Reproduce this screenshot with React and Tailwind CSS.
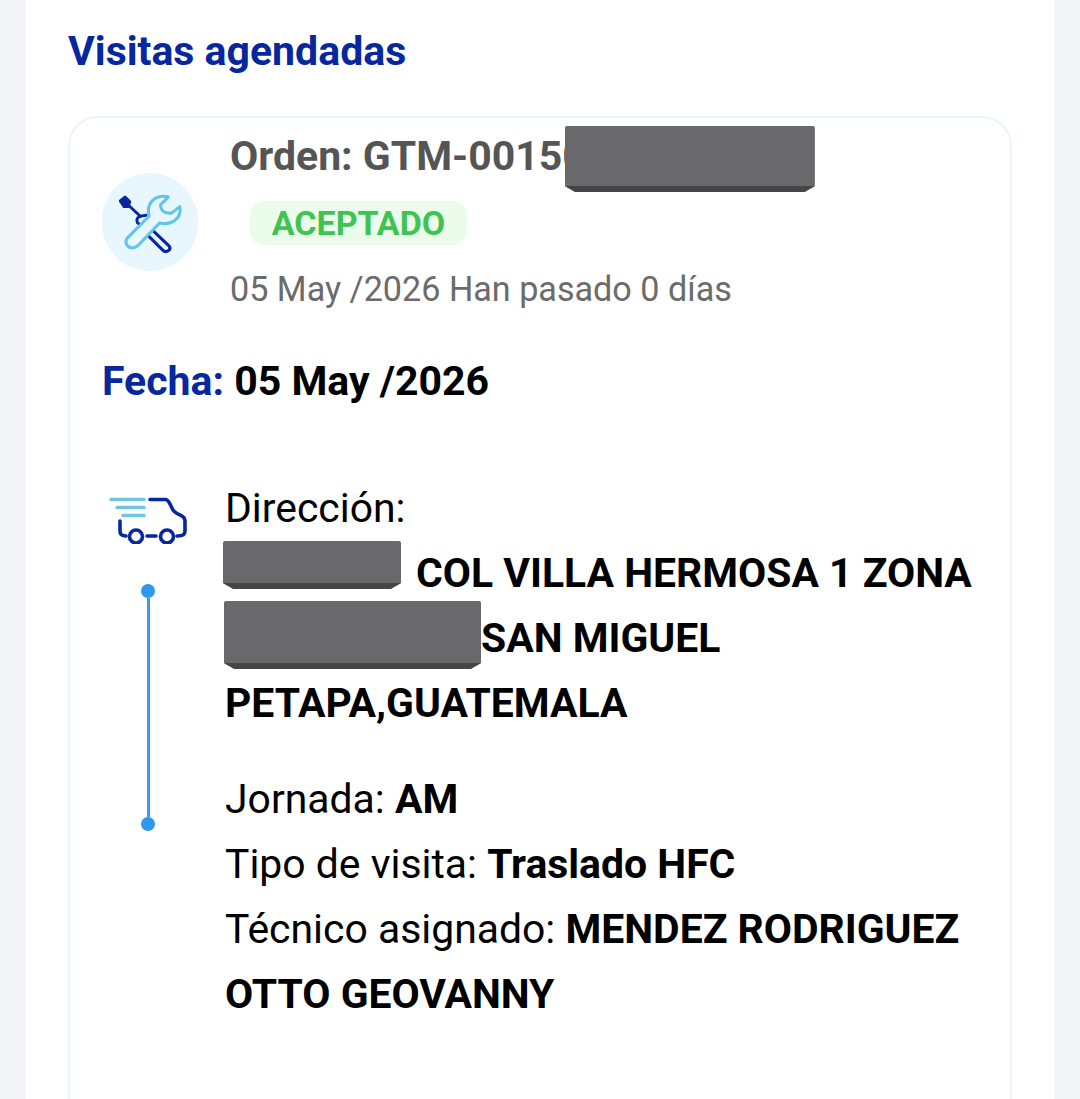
import React from 'react'

function Redacted({ className }) {
  return (
    <span className={`inline-block shrink-0 align-top bg-[#69696b] border-b-[6px] border-[#454548] rounded-t-[2px] [clip-path:polygon(0_0,100%_0,100%_calc(100%-6px),calc(100%-10px)_100%,10px_100%,0_calc(100%-6px))] ${className}`} />
  )
}

function ToolsIcon() {
  return (
    <svg viewBox="0 0 100 105" className="w-[100px] h-[105px]" fill="none">
      <path d="M19 30 L24 26 L29 31 L27 36 L23 36 Z" fill="#07279f" stroke="#07279f" strokeWidth="3" strokeLinejoin="round" />
      <path d="M26 33 L41 47" stroke="#07279f" strokeWidth="3" />
      <path d="M46 45 L39 46 Q35 49 37 53 L39 54" stroke="#07279f" strokeWidth="3" strokeLinecap="round" />
      <path d="M52 60 L70 77 Q72 80 69 82 Q66 84 63 81 L46 64" stroke="#07279f" strokeWidth="3.200" strokeLinecap="round" strokeLinejoin="round" />
      <path d="M26 69 L49 46 Q46 33 56 27 Q62 24 69 26 L61 34 Q61 40 66 42 L72 43 L81 36 Q83 46 75 51 Q68 55 60 53 L37 77 Q33 80 28 78 Q23 74 26 69 Z" fill="#e8f6fd" stroke="#62c4e8" strokeWidth="3.200" strokeLinejoin="round" />
    </svg>
  )
}

function TruckIcon() {
  return (
    <svg viewBox="18 15 80 50" className="w-[80px] h-[50px]" fill="none" strokeLinecap="round" strokeLinejoin="round">
      <path d="M21 20.5 H54 M27 28.5 H54 M33 36.5 H54" stroke="#6fc5e0" strokeWidth="3.400" />
      <path d="M60 20.5 H75 Q78 20.5 80 25 L83 31 Q84 33 90 36 Q95 38 95 42 V52 Q95 57 88 57 H87" stroke="#07279f" strokeWidth="3.600" />
      <path d="M30 42 V52 Q30 57 36 57" stroke="#07279f" strokeWidth="3.600" />
      <path d="M57 57 H66" stroke="#07279f" strokeWidth="3.600" />
      <circle cx="46" cy="57.500" r="6.500" stroke="#07279f" strokeWidth="3.600" />
      <circle cx="77" cy="57.500" r="6.500" stroke="#07279f" strokeWidth="3.600" />
    </svg>
  )
}

export default function App() {
  return (
    <div className="h-[1099px] overflow-hidden bg-[#f3f4f7] px-[26px] font-['Roboto',sans-serif]">
      <div className="h-full bg-white px-[42px]">
        <h1 className="pt-[28px] text-[41px] leading-[46px] font-bold text-[#07279f]">Visitas agendadas</h1>

        <div className="mt-[42px] h-[1100px] rounded-t-[30px] border-2 border-[#edf3f9] pl-[32px] pr-[30px]">
          {/* encabezado de la orden */}
          <div className="flex items-center pt-[8px]">
            <div className="mt-[6px] flex h-[98px] w-[96px] shrink-0 items-center justify-center rounded-full bg-[#e8f6fd]">
              <ToolsIcon />
            </div>
            <div className="ml-[32px]">
              <div className="flex h-[66px] items-center whitespace-nowrap text-[41px] font-bold text-[#555555]">
                <span className="-mt-[4px]">Orden: GTM-00150</span>
                <Redacted className="h-[66px] w-[250px] -ml-[21px]" />
              </div>
              <div className="mt-[9px] ml-[20px] flex h-[44px] w-[217px] items-center justify-center rounded-[14px] bg-[#ecfcec] text-[34px] font-bold text-[#3fc351]">
                ACEPTADO
              </div>
              <p className="mt-[21px] text-[34.150px] leading-[46px] text-[#6b6b6b]">05 May /2026 Han pasado 0 días</p>
            </div>
          </div>

          <p className="mt-[46px] text-[41px] leading-[46px] font-bold text-black">
            <span className="text-[#07279f]">Fecha:</span> 05 May /2026
          </p>

          {/* recorrido y datos de la visita */}
          <div className="mt-[78px] flex text-[40.900px] leading-[65px] text-black">
            <div className="flex w-[92px] shrink-0 flex-col items-center">
              <div className="mt-[12px]"><TruckIcon /></div>
              <div className="mt-[40px] h-[14px] w-[14px] rounded-full bg-[#2f97ee]" />
              <div className="h-[219px] w-[3px] bg-[#3f9ce4]" />
              <div className="h-[14px] w-[14px] rounded-full bg-[#2f97ee]" />
            </div>
            <div className="ml-[31px] -mt-[6px] min-w-0">
              <div>Dirección:</div>
              <div className="font-bold">
                <div className="flex h-[65px] items-center -ml-[2px]">
                  <Redacted className="h-[48px] w-[178px] -mt-[17px]" />
                  <span className="ml-[15px] whitespace-nowrap">COL VILLA HERMOSA 1 ZONA</span>
                </div>
                <div className="flex h-[65px] items-center -ml-[1px]">
                  <Redacted className="h-[68px] w-[257px] -mt-[7px]" />
                  <span className="whitespace-nowrap">SAN MIGUEL</span>
                </div>
                <div>PETAPA,GUATEMALA</div>
              </div>
              <div className="mt-[31px]">Jornada: <b>AM</b></div>
              <div>Tipo de visita: <b>Traslado HFC</b></div>
              <div>Técnico asignado: <b>MENDEZ RODRIGUEZ</b></div>
              <div className="font-bold">OTTO GEOVANNY</div>
            </div>
          </div>
        </div>
      </div>
    </div>
  )
}
